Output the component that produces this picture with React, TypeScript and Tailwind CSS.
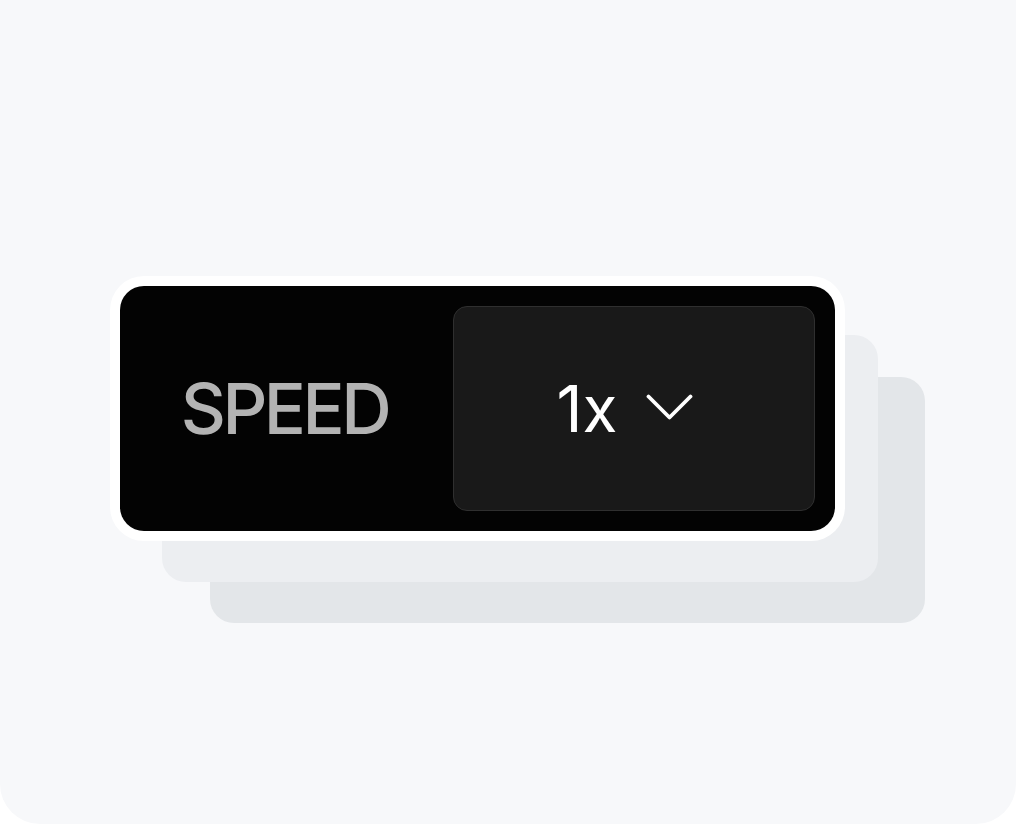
export default function App() {
  return (
    <div className="w-[1016px] h-[824px] bg-white">
      <div className="h-full rounded-b-[40px] bg-[#f7f8fa] pt-[276px] pl-[110px]">
        <div className="relative w-[735px]">
          {/* stacked backdrop layers */}
          <div className="absolute left-[100px] top-[101px] w-[715px] h-[246px] rounded-[24px] bg-[#e3e6e9]" />
          <div className="absolute left-[52px] top-[59px] w-[716px] h-[247px] rounded-[24px] bg-[#eceef1]" />

          <div className="relative rounded-[34px] bg-white p-[10px]">
            <div className="flex h-[245px] rounded-[24px] bg-[#030303] p-5">
              <div className="flex flex-1 items-center justify-center pr-[24px]">
                <span
                  className="text-[70px] font-medium leading-none text-[#b3b3b3] tracking-[-3.5px]"
                  style={{ fontFamily: 'Inter, "Liberation Sans", sans-serif' }}
                >
                  SPEED
                </span>
              </div>
              <button className="flex w-[362px] items-center justify-center gap-[29px] rounded-[14px] border border-[#2f2f2f] bg-[#191919] pr-[18px]">
                <span
                  className="text-[64px] font-normal leading-none text-white"
                  style={{ fontFamily: 'Inter, "Liberation Sans", sans-serif' }}
                >
                  1x
                </span>
                <svg width="47" height="27" viewBox="0 0 47 27" fill="none" className="mt-[-2px]">
                  <path d="M2.5 2.5 L23.5 23.5 L44.5 2.5" stroke="white" strokeWidth="3.8" strokeLinecap="round" strokeLinejoin="round" />
                </svg>
              </button>
            </div>
          </div>
        </div>
      </div>
    </div>
  );
}
